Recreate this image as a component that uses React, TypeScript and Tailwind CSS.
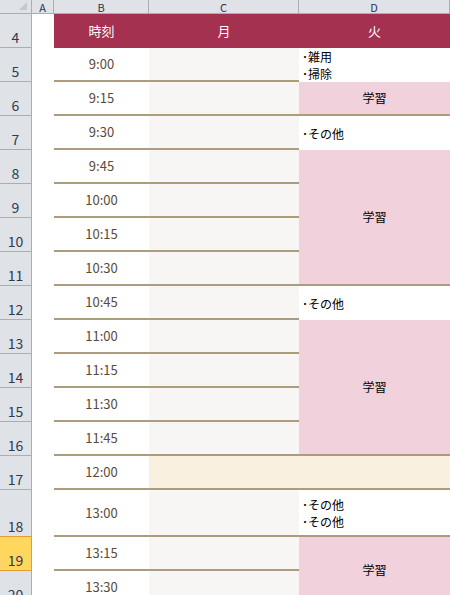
import type { ReactNode } from "react";

const font = { fontFamily: '"Noto Sans CJK JP", "Noto Sans", sans-serif' };

const rows: { n: number; time: string }[] = [
  { n: 5, time: "9:00" },
  { n: 6, time: "9:15" },
  { n: 7, time: "9:30" },
  { n: 8, time: "9:45" },
  { n: 9, time: "10:00" },
  { n: 10, time: "10:15" },
  { n: 11, time: "10:30" },
  { n: 12, time: "10:45" },
  { n: 13, time: "11:00" },
  { n: 14, time: "11:15" },
  { n: 15, time: "11:30" },
  { n: 16, time: "11:45" },
  { n: 17, time: "12:00" },
  { n: 18, time: "13:00" },
  { n: 19, time: "13:15" },
  { n: 20, time: "13:30" },
];

const line = "border-b-2 border-[#ab9c7e]";

function Study({ span }: { span: string }) {
  return (
    <div className={`${span} bg-[#f0d1dc] ${line} flex items-center justify-center text-[12px] text-black`}>
      学習
    </div>
  );
}

function Notes({ items, border }: { items: string[]; border?: boolean }) {
  return (
    <div className={`bg-white flex flex-col justify-center pl-[3px] text-[12px] leading-[17px] text-black ${border ? line : ""}`}>
      {items.map((t, i) => (
        <span key={i}>･{t}</span>
      ))}
    </div>
  );
}

const dCells: Record<number, ReactNode> = {
  5: <Notes items={["雑用", "掃除"]} />,
  6: <Study span="row-span-1" />,
  7: <Notes items={["その他"]} />,
  8: <Study span="row-span-4" />,
  12: <Notes items={["その他"]} />,
  13: <Study span="row-span-4" />,
  18: <Notes items={["その他", "その他"]} border />,
  19: <Study span="row-span-2" />,
};

export default function App() {
  return (
    <div className="w-[450px] h-[595px] overflow-hidden bg-white" style={font}>
      <div className="grid grid-cols-[32px_22px_95px_150px_151px] grid-rows-[14px_repeat(14,34px)_47px_34px_34px]">
        {/* column letters */}
        <div className="bg-[#dfe3e8] border-r border-b border-[#a9aeb5] relative">
          <div className="absolute right-[4px] bottom-[3px] w-0 h-0 border-l-[8px] border-l-transparent border-b-[8px] border-b-[#c5c9cf]" />
        </div>
        {["A", "B", "C", "D"].map((c) => (
          <div
            key={c}
            className="bg-[#dfe3e8] border-r border-b border-[#a9aeb5] last:border-r-0 flex items-center justify-center text-[11px] leading-[12px] text-[#27364d]"
          >
            {c}
          </div>
        ))}

        {/* row 4 header */}
        <div className="bg-[#dfe3e8] border-r border-b border-[#a9aeb5] flex items-end justify-center pb-[1px] text-[14px] leading-[18px] text-[#2e3a50]">
          4
        </div>
        <div className="bg-white" />
        <div className="bg-[#a43150] flex items-center justify-center text-[13px] text-white">時刻</div>
        <div className="bg-[#a43150] flex items-center justify-center text-[13px] text-white">月</div>
        <div className="bg-[#a43150] flex items-center justify-center text-[13px] text-white">火</div>

        {rows.map((r) => (
          <Row key={r.n} n={r.n} time={r.time} />
        ))}
      </div>
    </div>
  );
}

function Row({ n, time }: { n: number; time: string }) {
  const selected = n === 19;
  return (
    <>
      <div
        className={
          selected
            ? "bg-[#ffd75e] border border-l-0 border-[#e29c38] flex items-end justify-center pb-[1px] text-[14px] leading-[18px] text-[#2e3a50] -mt-px"
            : "bg-[#dfe3e8] border-r border-b border-[#a9aeb5] flex items-end justify-center pb-[1px] text-[14px] leading-[18px] text-[#2e3a50]"
        }
      >
        {n}
      </div>
      <div className="bg-white" />
      <div className={`bg-white ${line} flex items-center justify-center text-[13px] text-[#594a3c]`}>{time}</div>
      {n === 17 ? (
        <div className={`col-span-2 bg-[#faf0e0] ${line}`} />
      ) : (
        <>
          <div className={`bg-[#f7f6f4] ${line}`} />
          {dCells[n]}
        </>
      )}
    </>
  );
}
